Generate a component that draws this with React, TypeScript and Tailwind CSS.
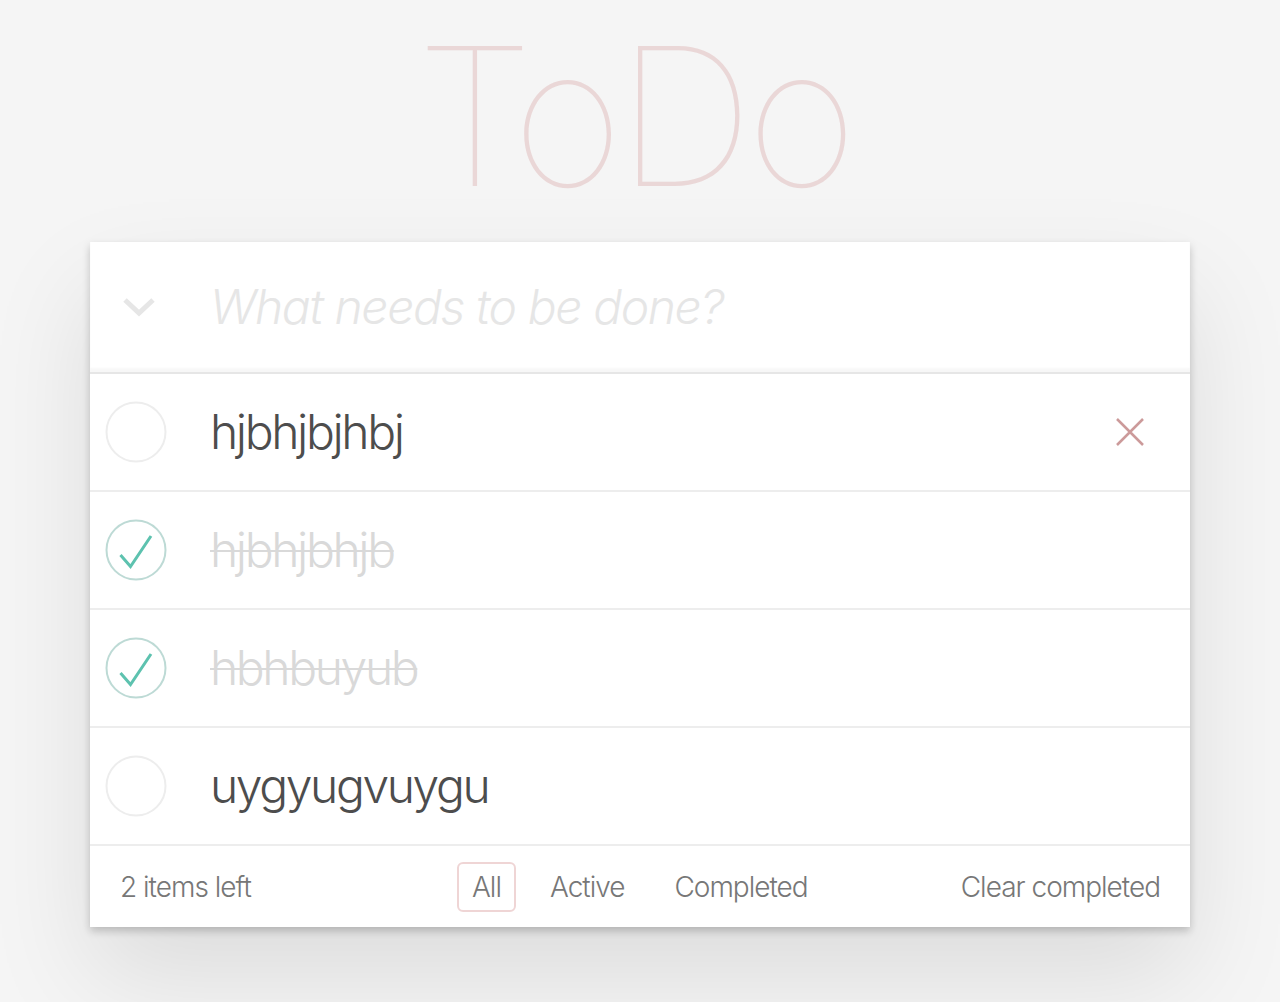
import { useState } from "react"

type Todo = { id: number; title: string; completed: boolean }

const initialTodos: Todo[] = [
  { id: 1, title: "hjbhjbjhbj", completed: false },
  { id: 2, title: "hjbhjbhjb", completed: true },
  { id: 3, title: "hbhbuyub", completed: true },
  { id: 4, title: "uygyugvuygu", completed: false },
]

function Toggle({ checked }: { checked: boolean }) {
  return (
    <svg width="62" height="62" viewBox="0 0 62 62" className="block">
      <circle cx="31" cy="31" r="29.5" fill="none" stroke={checked ? "#bddad5" : "#ededed"} strokeWidth="2" />
      {checked && <path d="M46 17 L25.5 47.5 L15.5 36" fill="none" stroke="#5dc2af" strokeWidth="3" />}
    </svg>
  )
}

export default function App() {
  const [todos] = useState<Todo[]>(initialTodos)
  const left = todos.filter((t) => !t.completed).length

  return (
    <div className="min-h-screen bg-[#f5f5f5] font-['Inter','Liberation_Sans',sans-serif] font-light text-[#4d4d4d]">
      <div className="mx-auto w-[1100px] pb-[76px]">
        <h1 className="mb-[10px] pr-[14px] text-center text-[192px] leading-[232px] font-thin tracking-[-7px] text-[rgba(175,47,47,0.15)]">
          ToDo
        </h1>

        <section className="bg-white shadow-[0_4px_8px_0_rgba(0,0,0,0.2),0_50px_100px_0_rgba(0,0,0,0.1)]">
          <header className="flex h-[130px] items-center shadow-[inset_0_-4px_2px_rgba(0,0,0,0.03)]">
            <div className="flex w-[120px] justify-center">
              <svg width="34" height="20" viewBox="0 0 34 20" className="ml-[-22px]">
                <path d="M3 3 L17 16 L31 3" fill="none" stroke="#e6e6e6" strokeWidth="5" />
              </svg>
            </div>
            <span className="text-[48px] italic font-light tracking-[-1.4px] text-[#e6e6e6]">What needs to be done?</span>
          </header>

          <ul className="border-t-2 border-[#e6e6e6]">
            {todos.map((todo) => (
              <li key={todo.id} className="flex h-[118px] items-center border-b-2 border-[#ededed]">
                <div className="flex w-[120px] pl-[15px]">
                  <Toggle checked={todo.completed} />
                </div>
                <span
                  className={
                    todo.completed
                      ? "flex-1 text-[48px] tracking-[-2.4px] text-[#d9d9d9] line-through decoration-2"
                      : "flex-1 text-[48px] tracking-[-2.4px] text-[#4d4d4d]"
                  }
                >
                  {todo.title}
                </span>
                {todo.id === 1 && (
                  <svg width="30" height="30" viewBox="0 0 30 30" className="mr-[45px]">
                    <path d="M2 2 L28 28 M28 2 L2 28" stroke="#cc9a9a" strokeWidth="2.5" />
                  </svg>
                )}
              </li>
            ))}
          </ul>

          <footer className="flex h-[81px] items-center px-[30px] text-[28px] tracking-[-1px] text-[#777]">
            <span className="w-[331px]">{left} items left</span>
            <div className="flex flex-1 items-center gap-[6px]">
              <span className="mx-[6px] rounded-[6px] border-2 border-[rgba(175,47,47,0.2)] px-[13px] py-[2px]">All</span>
              <span className="mx-[6px] border-2 border-transparent px-[14px] py-[2px]">Active</span>
              <span className="mx-[6px] border-2 border-transparent px-[14px] py-[2px]">Completed</span>
            </div>
            <span>Clear completed</span>
          </footer>
        </section>
      </div>
    </div>
  )
}
